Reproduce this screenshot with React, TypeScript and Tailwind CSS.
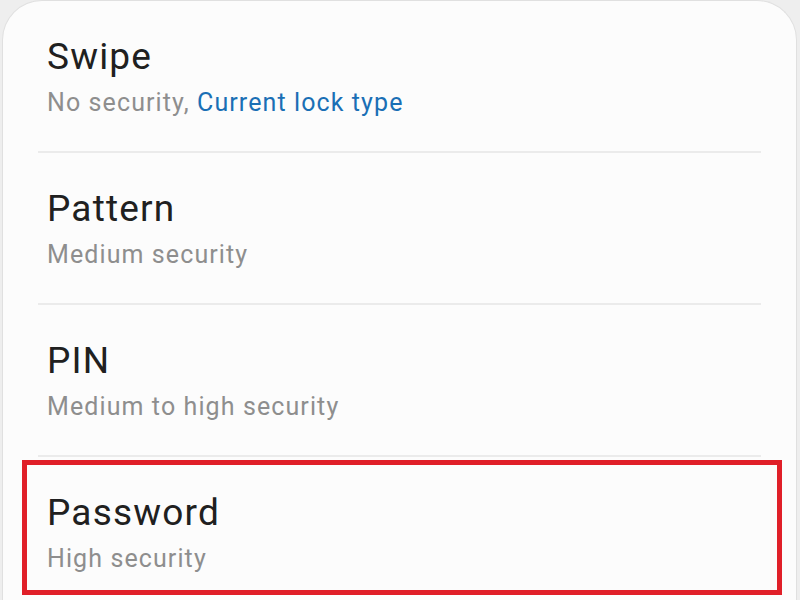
import React from 'react';

interface LockOption {
  title: string;
  subtitle: string;
  current?: boolean;
  highlighted?: boolean;
}

const OPTIONS: LockOption[] = [
  { title: "Swipe", subtitle: "No security", current: true },
  { title: "Pattern", subtitle: "Medium security" },
  { title: "PIN", subtitle: "Medium to high security" },
  { title: "Password", subtitle: "High security", highlighted: true },
];

function OptionRow({ option }: { option: LockOption }) {
  return (
    <div className="relative flex flex-col h-[150px] pt-[34px] px-[44px]">
      <span className="text-[37px] leading-[44px] tracking-[1.2px] text-[#202020]">{option.title}</span>
      <span className="mt-[9px] text-[25px] leading-[30px] tracking-[1.1px] text-[#8e8e8e]">
        {option.subtitle}
        {option.current && (
          <>
            , <span className="text-[#1a6fb5]">Current lock type</span>
          </>
        )}
      </span>
      {/* highlight frame drawn over the row */}
      {option.highlighted && (
        <div className="pointer-events-none absolute top-[3px] left-[19px] right-[14px] bottom-[12px] border-[5px] border-[#e01f28]" />
      )}
    </div>
  );
}

export default function App() {
  return (
    <div
      className="w-[800px] h-[600px] overflow-hidden bg-[#eeeeee] pl-[2px] pr-[3px]"
      style={{ fontFamily: "Roboto, 'Noto Sans', sans-serif" }}
    >
      <div className="h-full bg-[#fcfcfc] rounded-t-[40px] border-x border-t border-[#e0e0e0]">
        {OPTIONS.map((option, i) => (
          <div key={option.title}>
            {i > 0 && <div className="mx-[35px] h-[2px] bg-[#ebebeb]" />}
            <OptionRow option={option} />
          </div>
        ))}
      </div>
    </div>
  );
}
